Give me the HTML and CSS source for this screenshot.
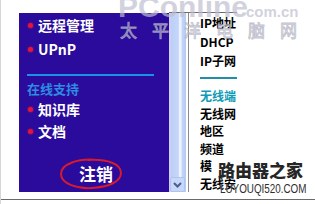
FILE: index.html
```html
<!DOCTYPE html>
<html lang="zh-CN">
<head>
<meta charset="utf-8">
<link rel="stylesheet" href="styles.css">
</head>
<body>
<div class="screen">
  <div class="frames">
    <nav class="menu">
      <div class="item"><span class="dot"></span><span>远程管理</span></div>
      <div class="item"><span class="dot"></span><span>UPnP</span></div>
      <div class="menu-rule"></div>
      <div class="menu-head">在线支持</div>
      <div class="item sub"><span class="dot"></span><span>知识库</span></div>
      <div class="item sub"><span class="dot"></span><span>文档</span></div>
      <div class="logout">注销</div>
    </nav>
    <div class="pane">
      <div class="scrollbar">
        <div class="arrow">
          <svg width="9" height="6" viewBox="0 0 9 6"><path d="M1 1 L4.5 4.5 L8 1" fill="none" stroke="#4a5f8e" stroke-width="2"/></svg>
        </div>
      </div>
      <div class="divider"></div>
      <div class="content">
        <div class="row">IP地址</div>
        <div class="row">DHCP</div>
        <div class="row">IP子网</div>
        <div class="content-rule"></div>
        <div class="row2 head">无线端</div>
        <div class="row2">无线网</div>
        <div class="row2">地区</div>
        <div class="row2">频道</div>
        <div class="row2">模</div>
        <div class="row2">无线安</div>
      </div>
    </div>
  </div>
  <div class="bottom-rule"></div>

  <div class="wm-pc">PConline</div>
  <div class="wm-com">com.cn</div>
  <div class="wm-cn">太平洋电脑网</div>
  <svg class="circle" width="66" height="34" viewBox="0 0 66 34"><path d="M40 3 C20 1 3 7 3 17 C3 27 20 32 34 31 C50 30 63 25 63 16 C63 7 50 2 30 3" fill="none" stroke="#d81a2c" stroke-width="2"/></svg>
  <div class="wm-home">路由器之家</div>
  <div class="wm-url">LUYOUQI520.COM</div>
</div>
</body>
</html>
```

FILE: styles.css
```css
html, body {
  margin: 0;
  padding: 0;
  background: #fff;
}

.screen {
  position: relative;
  width: 315px;
  height: 204px;
  overflow: hidden;
  background: #fff;
  border-left: 1px solid #d6d6d6;
  box-sizing: border-box;
  font-family: "Noto Sans CJK SC", "Noto Sans", sans-serif;
}

.frames {
  display: flex;
  padding: 12px 0 0 18px;
}

.menu {
  width: 150px;
  height: 179px;
  margin-top: 1px;
  background: #2a0b9c;
  color: #fff;
  font-weight: 700;
  font-size: 14px;
}

.item {
  display: flex;
  align-items: center;
  height: 24px;
  padding-left: 9px;
  line-height: 24px;
}

.item.sub {
  height: 22px;
  line-height: 22px;
}

.dot {
  width: 5px;
  height: 5px;
  margin-right: 5px;
  border-radius: 50%;
  background: #e0143e;
  box-shadow: 0 0 1.5px 0.5px rgba(200, 20, 70, 0.7);
}

.menu-rule {
  height: 2px;
  margin: 13px 15px 0 8px;
  background: #1c92e6;
}

.menu-head {
  margin-top: 4px;
  padding-left: 8px;
  height: 18px;
  line-height: 18px;
  font-size: 13px;
  color: #2e8ce2;
}

.logout {
  margin-top: 20px;
  height: 24px;
  line-height: 24px;
  text-align: center;
  padding-left: 4px;
  font-size: 17px;
  font-weight: 700;
}

.pane {
  display: flex;
  height: 180px;
  border-top: 1px solid #6c6c6c;
  box-sizing: border-box;
}

.scrollbar {
  width: 17px;
  display: flex;
  flex-direction: column;
  justify-content: flex-end;
  background: linear-gradient(90deg, #cdd0f4 0, #cdd0f4 2px, #bccff6 2px, #c4d6fa 55%, #eef4ff 62%, #eef4ff 70%, #c2d4f8 78%, #b6caf2 100%);
}

.arrow {
  height: 15px;
  margin: 0 1px;
  border: 1px solid #b2c4ea;
  border-radius: 2px;
  background: #c6d7fb;
  box-sizing: border-box;
  display: flex;
  align-items: center;
  justify-content: center;
}

.divider {
  width: 1px;
  margin-left: 2px;
  background: #8c8c8c;
}

.content {
  width: 48px;
  overflow: hidden;
  white-space: nowrap;
  padding-left: 11px;
  box-sizing: border-box;
  font-size: 12px;
  font-weight: 700;
  color: #000;
}

.row {
  height: 19px;
  line-height: 19px;
}

.content-rule {
  height: 2px;
  margin: 7px 0 8px;
  background: #1f8ea6;
}

.row2 {
  height: 17.6px;
  line-height: 17.6px;
}

.row2.head {
  color: #0f9bb6;
}

.bottom-rule {
  height: 1px;
  margin-top: 7px;
  background: #6a6a6a;
}

/* watermarks and annotation overlays */
.wm-pc {
  position: absolute;
  left: 117px;
  top: -8px;
  font-family: "Liberation Sans", sans-serif;
  font-size: 30px;
  font-weight: 700;
  line-height: 30px;
  color: rgba(190, 190, 208, 0.7);
  pointer-events: none;
}

.wm-com {
  position: absolute;
  left: 245px;
  top: 4px;
  font-family: "Liberation Sans", sans-serif;
  font-size: 15px;
  line-height: 15px;
  font-weight: 700;
  color: rgba(190, 190, 205, 0.7);
  pointer-events: none;
}

.wm-cn {
  position: absolute;
  left: 119px;
  top: 21px;
  font-size: 17px;
  line-height: 18px;
  letter-spacing: 15px;
  color: rgba(235, 235, 245, 0.4);
  -webkit-text-stroke: 0.9px rgba(175, 175, 192, 0.75);
  pointer-events: none;
}

.circle {
  position: absolute;
  left: 57px;
  top: 157px;
}

.wm-home {
  position: absolute;
  left: 217px;
  top: 160px;
  font-size: 17px;
  line-height: 20px;
  font-weight: 900;
  color: #262626;
  pointer-events: none;
}

.wm-url {
  position: absolute;
  left: 219px;
  top: 183px;
  font-family: "Liberation Sans", sans-serif;
  font-size: 12px;
  line-height: 13px;
  color: #2e2e2e;
  transform: scaleX(0.82);
  transform-origin: 0 0;
  text-shadow: 0 0 1px #fff;
  pointer-events: none;
}
```
